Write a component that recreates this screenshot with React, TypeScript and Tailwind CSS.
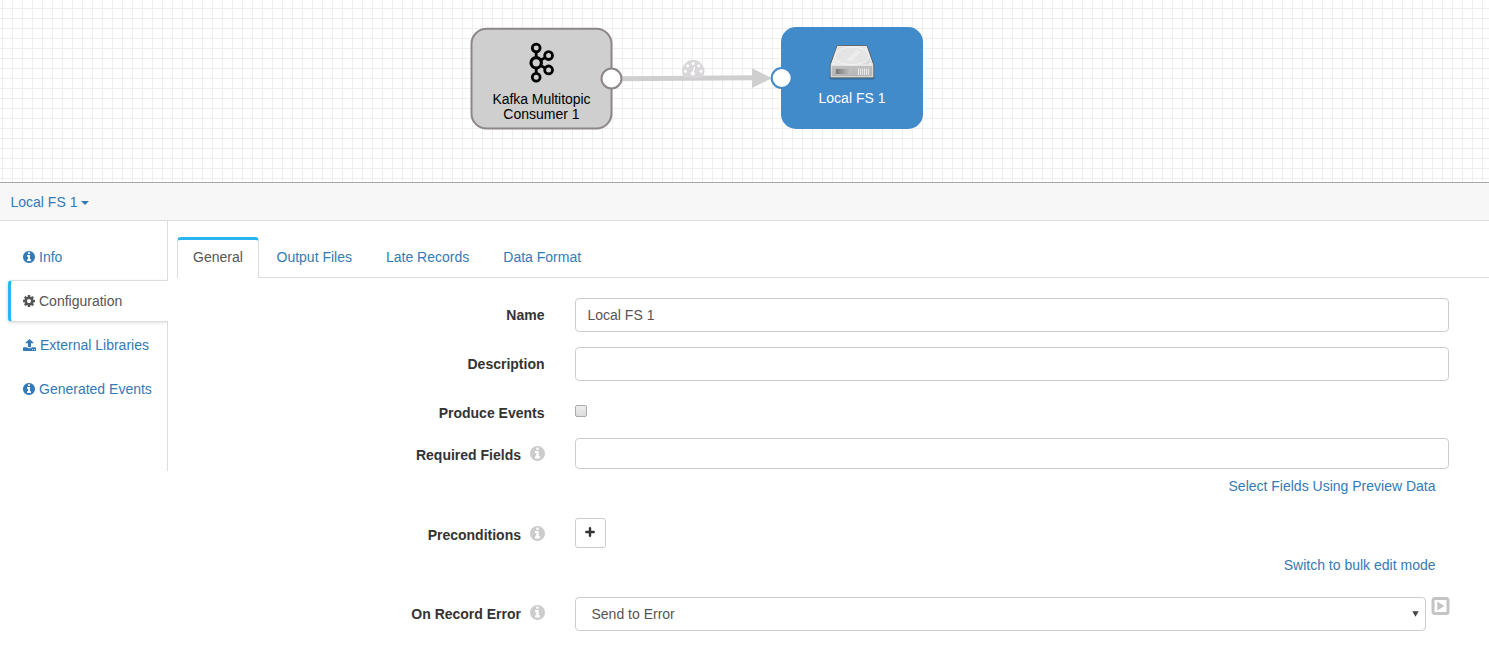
import type { ReactNode } from "react";

const paths = {
  info: "M1152 1376v-160q0-14-9-23t-23-9h-96v-512q0-14-9-23t-23-9h-320q-14 0-23 9t-9 23v160q0 14 9 23t23 9h96v320h-96q-14 0-23 9t-9 23v160q0 14 9 23t23 9h448q14 0 23-9t9-23zm-128-896v-160q0-14-9-23t-23-9h-192q-14 0-23 9t-9 23v160q0 14 9 23t23 9h192q14 0 23-9t9-23zm640 416q0 209-103 385.5t-279.5 279.5-385.5 103-385.5-103-279.5-279.5-103-385.5 103-385.5 279.5-279.5 385.5-103 385.5 103 279.5 279.5 103 385.5z",
  cog: "M1152 896q0-106-75-181t-181-75-181 75-75 181 75 181 181 75 181-75 75-181zm512-109v222q0 12-8 23t-20 13l-185 28q-19 54-39 91 35 50 107 138 10 12 10 25t-9 23q-27 37-99 108t-94 71q-12 0-26-9l-138-108q-44 23-91 38-16 136-29 186-7 28-36 28h-222q-14 0-24.5-8.5t-11.5-21.5l-28-184q-49-16-90-37l-141 107q-10 9-25 9-14 0-25-11-126-114-165-168-7-10-7-23 0-12 8-23 15-21 51-66.5t54-70.5q-27-50-41-99l-183-27q-13-2-21-12.5t-8-23.5v-222q0-12 8-23t19-13l186-28q14-46 39-92-40-57-107-138-10-12-10-24 0-10 9-23 26-36 98.5-107.5t94.5-71.5q13 0 26 10l138 107q44-23 91-38 16-136 29-186 7-28 36-28h222q14 0 24.5 8.5t11.5 21.5l28 184q49 16 90 37l142-107q9-9 24-9 13 0 25 10 129 119 165 170 7 8 7 22 0 12-8 23-15 21-51 66.5t-54 70.5q26 50 41 98l183 28q13 2 21 12.5t8 23.5z",
  upload: "M1344 1472q0-26-19-45t-45-19-45 19-19 45 19 45 45 19 45-19 19-45zm256 0q0-26-19-45t-45-19-45 19-19 45 19 45 45 19 45-19 19-45zm128-224v320q0 40-28 68t-68 28h-1472q-40 0-68-28t-28-68v-320q0-40 28-68t68-28h427q21 56 70.5 92t110.5 36h256q61 0 110.5-36t70.5-92h427q40 0 68 28t28 68zm-325-648q-17 40-59 40h-256v448q0 26-19 45t-45 19h-256q-26 0-45-19t-19-45v-448h-256q-42 0-59-40-17-39 14-69l448-448q18-19 45-19t45 19l448 448q31 30 14 69z",
};

function InfoIcon({ className }: { className: string }) {
  return (
    <svg className={className} viewBox="128 128 1536 1536" fill="currentColor">
      <path d={paths.info} />
    </svg>
  );
}

function Canvas() {
  return (
    <svg className="block h-[182px] w-full" fontFamily="'Liberation Sans', Arial, sans-serif" fontSize="14">
      <defs>
        <pattern id="grid" x="2" y="8" width="10" height="10" patternUnits="userSpaceOnUse">
          <path d="M0 0h10v1H1v9H0z" fill="#eee" />
        </pattern>
        <linearGradient id="driveTop" x1="0" y1="0" x2="1" y2="1">
          <stop offset="0" stopColor="#dcdcdc" />
          <stop offset="0.5" stopColor="#e9e9e9" />
          <stop offset="1" stopColor="#d6d6d6" />
        </linearGradient>
        <linearGradient id="driveFront" x1="0" y1="0" x2="0" y2="1">
          <stop offset="0" stopColor="#d4d4d4" />
          <stop offset="1" stopColor="#b4b4b4" />
        </linearGradient>
        <linearGradient id="driveSlot">
          <stop offset="0" stopColor="#777" />
          <stop offset="1" stopColor="#c4c4c4" />
        </linearGradient>
      </defs>
      <rect width="100%" height="182" fill="url(#grid)" />

      <path d="M621 76.3 753 75.3V80.3L621 81.3z" fill="#cfcfcf" />
      <path d="M752 68.3 772 78.2 752 88z" fill="#cfcfcf" />
      <g transform="translate(682.2 60)">
        <path d="M11 0a11 11 0 0 1 9.3 17.1q-.3.6-1 .6H2.7q-.7 0-1-.6A11 11 0 0 1 11 0z" fill="#dad7da" />
        <g fill="#fff">
          <circle cx="3.2" cy="11.2" r="1.5" />
          <circle cx="5.5" cy="5.7" r="1.5" />
          <circle cx="11" cy="3.4" r="1.5" />
          <circle cx="16.5" cy="5.7" r="1.5" />
          <circle cx="18.8" cy="11.2" r="1.5" />
          <circle cx="10.6" cy="13.5" r="2.1" />
        </g>
        <path d="M10.7 13 12.3 7" stroke="#fff" strokeWidth="1.2" strokeLinecap="round" />
      </g>

      <rect x="471.5" y="28.8" width="140" height="99.7" rx="15" fill="#cfcfcf" stroke="#8d8787" strokeWidth="2" />
      <g fill="none" stroke="#000" strokeWidth="2.8">
        <path d="M536.2 52v6M536.2 68v6M540.5 60.3l4.2-2.4M540.5 65.4l4.2 2.4" />
        <circle cx="536.2" cy="48" r="3.9" />
        <circle cx="536.2" cy="62.8" r="5.2" strokeWidth="3.2" />
        <circle cx="536.2" cy="77.2" r="3.9" />
        <circle cx="548.6" cy="55.6" r="3.9" />
        <circle cx="548.6" cy="69.9" r="3.9" />
      </g>
      <text x="541.5" y="104" textAnchor="middle" textLength="98">Kafka Multitopic</text>
      <text x="541.5" y="119" textAnchor="middle">Consumer 1</text>
      <circle cx="611.5" cy="78.5" r="10" fill="#fff" stroke="#8d8787" strokeWidth="2" />

      <rect x="781" y="27" width="142" height="102" rx="15" fill="#428bca" />
      <rect x="829.5" y="74" width="45" height="5.8" rx="2" fill="#2d5f8b" opacity=".55" />
      <path d="M838 45.5h28q.9 0 1.3 1l6.4 18.2v11.8q0 1.2-1.2 1.2h-41q-1.2 0-1.2-1.2V64.7l6.5-18.2q.3-1 1.2-1z" fill="url(#driveFront)" stroke="#5b5f61" />
      <path d="M837.8 46.4h28.4l6.4 18.2h-41.2z" fill="url(#driveTop)" stroke="#f4f4f4" strokeWidth=".7" />
      <path d="M834.8 56.5c.4 5 7.5 8 17.2 8s16.800-3 17.200-8c-.4-4.500-6.500-9.300-17.200-9.300s-16.800 4.800-17.200 9.300z" fill="#e4e4e4" stroke="#f6f6f6" strokeWidth=".8" />
      <path d="M846 60l11-10 4 1.400-9 10z" fill="#f2f2f2" opacity=".6" />
      <circle cx="833.7" cy="63.6" r=".8" fill="#fff" />
      <circle cx="870" cy="63.6" r=".8" fill="#fff" />
      <path d="M831 65.500h42M831.200 65.500v11.300h41.600V65.500" stroke="#eee" strokeWidth=".8" fill="none" />
      <rect x="835.8" y="69" width="15" height="5" fill="url(#driveSlot)" />
      <path d="M858.5 68.500v6.500M860.500 68.500v6.500M862.500 68.500v6.500M864.500 68.500v6.500M866.500 68.500v6.500M868.500 68.500v6.500" stroke="#f2f2f2" strokeWidth=".9" />
      <text x="852" y="103" textAnchor="middle" fill="#fff">Local FS 1</text>
      <circle cx="781.7" cy="78" r="10" fill="#fff" stroke="#428bca" strokeWidth="2" />
    </svg>
  );
}

function Row({ label, hint, height, children }: { label: string; hint?: boolean; height: string; children: ReactNode }) {
  return (
    <div className={`flex items-start ${height}`}>
      <label className="flex w-[377px] shrink-0 items-center justify-end pt-[7px] font-bold text-[#333]">
        <span className={hint ? "" : "pr-[0.5px]"}>{label}</span>
        {hint && <InfoIcon className="mb-[3px] ml-[8.5px] mr-[0.5px] size-[15px] text-[#ccc]" />}
      </label>
      <div className="ml-[30px] w-[874px]">{children}</div>
    </div>
  );
}

const field = "block w-full rounded-[4px] border border-[#ccc] bg-white pl-[11.5px] pr-3 text-[#555] outline-none";

export default function App() {
  return (
    <div className="h-[645px] overflow-hidden bg-white font-['Liberation_Sans',Arial,sans-serif] text-[14px] leading-5 text-[#337ab7]">
      <Canvas />
      <header className="flex h-[39px] items-center border-y border-t-[#aaa] border-b-[#ddd] bg-[#f7f7f7] pl-[10.5px]">
        Local FS 1
        <span className="ml-1 mt-[2px] border-x-4 border-t-4 border-x-transparent border-t-[#337ab7]" />
      </header>
      <div className="flex">
        <nav className="flex h-[250px] w-[168px] shrink-0 flex-col pl-2">
          <div className="flex h-[59px] items-center gap-1 border-r border-[#ddd] pl-[15px] pt-[13px]">
            <InfoIcon className="size-3" />
            Info
          </div>
          <div className="flex h-[42px] items-center gap-1 rounded-l-[4px] border-y border-l-[3px] border-[#ddd] border-l-[#29b6f0] pl-3 text-[#555] shadow-[-1px_1px_3px_rgba(0,0,0,0.12)] [clip-path:inset(-4px_0_-4px_-4px)]">
            <svg className="size-3" viewBox="128 128 1536 1536" fill="currentColor">
              <path d={paths.cog} />
            </svg>
            Configuration
          </div>
          <div className="flex grow flex-col gap-6 border-r border-[#ddd] pl-[15px] pt-[13px]">
            <div className="flex items-center gap-1">
              <svg className="h-3 w-[13px]" viewBox="64 60 1664 1604" preserveAspectRatio="none" fill="currentColor">
                <path d={paths.upload} />
              </svg>
              External Libraries
            </div>
            <div className="flex items-center gap-1">
              <InfoIcon className="size-3" />
              Generated Events
            </div>
          </div>
        </nav>
        <main className="min-w-0 grow">
          <div className="flex h-[57px] items-end">
            <div className="h-px w-[9px]" />
            <div className="flex h-[41px] w-[82px] items-center justify-center rounded-t-[4px] border-x border-t-[3px] border-[#ddd] border-t-[#29b6f0] pb-1 text-[#555]">
              General
            </div>
            <div className="flex h-10 grow gap-[34px] border-b border-[#ddd] pl-[17.5px] pt-[9px]">
              <span>Output Files</span>
              <span>Late Records</span>
              <span>Data Format</span>
            </div>
          </div>
          <form className="pt-5">
            <Row label="Name" height="h-[49px]">
              <input className={`${field} h-[34px]`} defaultValue="Local FS 1" />
            </Row>
            <Row label="Description" height="h-[49px]">
              <input className={`${field} h-[34px]`} />
            </Row>
            <Row label="Produce Events" height="h-[42px]">
              <input
                type="checkbox"
                className="mt-[9px] block size-3 appearance-none rounded-[2px] border border-[#aaa] bg-linear-to-b from-[#eee] to-[#dcdcdc]"
              />
            </Row>
            <Row label="Required Fields" hint height="h-[80px]">
              <input className={`${field} h-[31px]`} />
              <div className="mt-[7px] pr-[13.5px] text-right">Select Fields Using Preview Data</div>
            </Row>
            <Row label="Preconditions" hint height="h-[79px]">
              <button type="button" className="flex h-[30px] w-[31px] items-center justify-center rounded-[3px] border border-[#ccc] text-[#333]">
                <svg className="mb-[2px] mr-px size-[10px]" viewBox="0 0 10 10">
                  <path d="M5 1.300v7.400M1.300 5h7.400" stroke="currentColor" strokeWidth="2.400" strokeLinecap="round" />
                </svg>
              </button>
              <div className="mt-[7px] pr-[13.5px] text-right">Switch to bulk edit mode</div>
            </Row>
            <Row label="On Record Error" hint height="h-[34px]">
              <div className="flex w-[876px] items-start">
                <div className="flex h-[34px] w-[851px] shrink-0 items-center justify-between rounded-[4px] border border-[#ccc] pl-[15.5px] pr-[6px] text-[#555]">
                  Send to Error
                  <svg className="h-[6px] w-[7px]" viewBox="0 0 7 6" fill="#444">
                    <path d="M.3.2h6.4L3.5 5.8z" />
                  </svg>
                </div>
                <svg className="ml-[5px] h-[18px] w-[19px]" viewBox="0 0 19 18">
                  <rect x="2" y="1.500" width="15" height="15" rx="2" fill="none" stroke="#c4c4c4" strokeWidth="3" />
                  <path d="M6.3 4.600v8.800L13.400 9z" fill="#c4c4c4" />
                </svg>
              </div>
            </Row>
          </form>
        </main>
      </div>
    </div>
  );
}
